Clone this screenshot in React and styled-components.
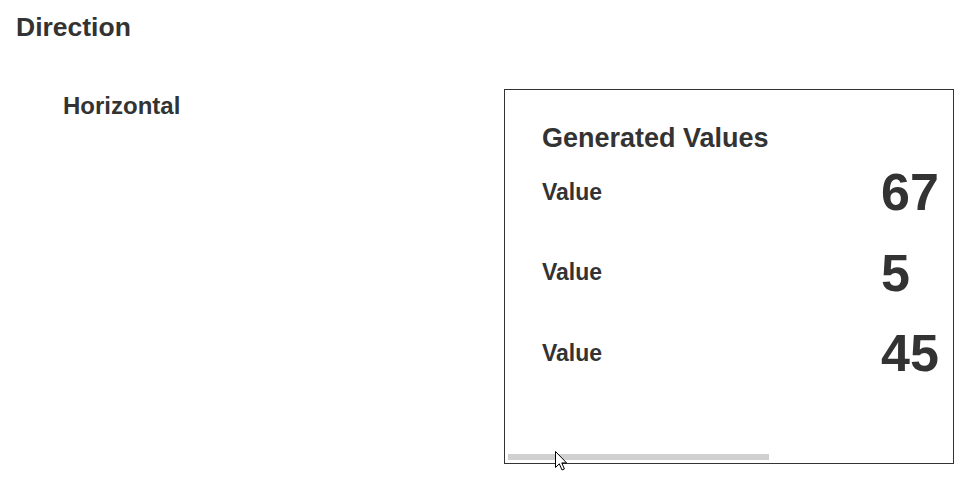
import React from 'react';
import styled, { createGlobalStyle } from 'styled-components';

const values = [67, 5, 45];

// visible share of the wide content, as the scroll thumb shows it
const CONTENT_WIDTH = 752;
const VIEW_WIDTH = 448;

const App = () => {
  const thumbWidth = Math.round((VIEW_WIDTH / CONTENT_WIDTH) * VIEW_WIDTH) - 6;
  return (
    <>
      <GlobalStyle />
      <StyledPage>
        <StyledHeading>Direction</StyledHeading>
        <StyledSection>
          <StyledLabelColumn>
            <StyledSubHeading>Horizontal</StyledSubHeading>
          </StyledLabelColumn>
          <StyledFrame>
            <StyledViewport>
              <StyledContent>
                <StyledTitle>Generated Values</StyledTitle>
                {values.map((value, i) => (
                  <StyledRow key={i}>
                    <StyledName>Value</StyledName>
                    <StyledNumber>{value}</StyledNumber>
                  </StyledRow>
                ))}
              </StyledContent>
            </StyledViewport>
            <StyledThumb style={{ width: thumbWidth }} />
            <StyledCursor width="13" height="21" viewBox="0 0 13 21">
              <path
                d="M0.5 0.5 L0.5 16.5 L4.3 12.8 L7 19 L9.4 18 L6.8 11.9 L11.6 11.9 Z"
                fill="#fff"
                stroke="#000"
                strokeWidth="1"
              />
            </StyledCursor>
          </StyledFrame>
        </StyledSection>
      </StyledPage>
    </>
  );
};

const GlobalStyle = createGlobalStyle`
  body {
    margin: 0;
    background: #fff;
    color: #333;
    font-family: "Liberation Sans", Arial, sans-serif;
  }
`;

const StyledPage = styled.div`
  padding: 12px 0 15px;
`;

const StyledHeading = styled.h2`
  margin: 0 0 0 16px;
  font-size: 26.5px;
  font-weight: bold;
  line-height: normal;
`;

const StyledSection = styled.div`
  display: flex;
  align-items: flex-start;
  margin-top: 46px;
`;

const StyledLabelColumn = styled.div`
  width: 504px;
  padding-left: 63px;
  padding-top: 3px;
  box-sizing: border-box;
  flex-shrink: 0;
`;

const StyledSubHeading = styled.h3`
  margin: 0;
  font-size: 24px;
  font-weight: bold;
  line-height: normal;
`;

const StyledFrame = styled.div`
  position: relative;
  width: 450px;
  height: 375px;
  border: 1px solid #333;
  box-sizing: border-box;
`;

const StyledViewport = styled.div`
  width: 100%;
  height: 100%;
  overflow: hidden;
`;

const StyledContent = styled.div`
  width: ${CONTENT_WIDTH}px;
  padding: 33px 37px 0;
  box-sizing: border-box;
`;

const StyledTitle = styled.h3`
  margin: 0 0 8px;
  font-size: 27px;
  font-weight: bold;
  line-height: normal;
`;

const StyledRow = styled.div`
  display: grid;
  grid-template-columns: 1fr 1fr;
  align-items: center;
  margin-bottom: 20.7px;
`;

const StyledName = styled.span`
  font-size: 23px;
  font-weight: bold;
`;

const StyledNumber = styled.span`
  font-size: 52px;
  font-weight: bold;
`;

const StyledThumb = styled.div`
  position: absolute;
  left: 3px;
  bottom: 3px;
  height: 6px;
  background: #d0d0d0;
`;

const StyledCursor = styled.svg`
  position: absolute;
  left: 50px;
  top: 361px;
  z-index: 2;
  pointer-events: none;
`;

export default App;
